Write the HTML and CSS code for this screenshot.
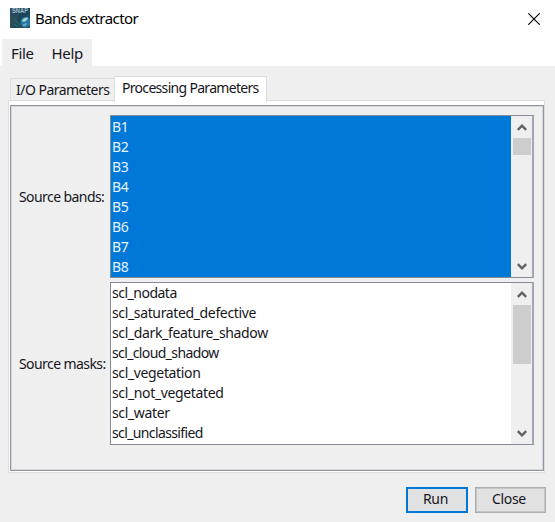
FILE: index.html
```html
<!DOCTYPE html>
<html lang="en">
<head>
<meta charset="utf-8">
<title>Bands extractor</title>
<link rel="stylesheet" href="styles.css">
</head>
<body>
<div class="window">
  <header class="titlebar">
    <svg class="logo" width="20" height="20" viewBox="0 0 20 20">
      <defs>
        <linearGradient id="sky" x1="0" y1="0" x2="1" y2="1"><stop offset="0" stop-color="#344f68"/><stop offset=".5" stop-color="#18445c"/><stop offset="1" stop-color="#1d6070"/></linearGradient>
        <filter id="soft"><feGaussianBlur stdDeviation=".6"/></filter>
      </defs>
      <rect width="20" height="20" fill="url(#sky)"/>
      <g filter="url(#soft)">
        <path d="M0 8L9 7L7 14L3 20H0Z" fill="#2b4f58"/>
        <circle cx="15.5" cy="14" r="5" fill="#2878a5"/>
        <path d="M12 13Q13 9.500 18 9.500L17 12L14 14Z" fill="#a9d3cd"/>
        <path d="M12 17L16 15L17 16L14 19Z" fill="#65a9bd"/>
        <path d="M5 12L10 17M4 16L8 19" stroke="#2d6b63" stroke-width="1.1"/>
      </g>
      <text x="2" y="5.300" class="logo-text" textLength="16" lengthAdjust="spacingAndGlyphs">SNAP</text>
    </svg>
    <h1 class="title">Bands extractor</h1>
    <svg class="close" width="12" height="12" viewBox="0 0 12 12"><path d="M.3.3L11.7 11.7M11.7.3L.3 11.7" stroke="#000" stroke-width="1.15"/></svg>
  </header>
  <nav class="menubar"><span class="file">File</span><span class="help">Help</span></nav>
  <main class="content">
    <div class="tabs"><div class="tab io"><span>I/O Parameters</span></div><div class="tab active"><span>Processing Parameters</span></div></div>
    <section class="pane">
      <div class="panel">
        <div class="field">
          <label class="label">Source bands:</label>
          <div class="listbox selected">
            <ul class="items"><li>B1</li><li>B2</li><li>B3</li><li>B4</li><li>B5</li><li>B6</li><li>B7</li><li>B8</li></ul>
            <div class="scrollbar">
              <svg class="arrow" width="10" height="7" viewBox="0 0 10 7"><path d="M.8 5.8L5 1.7L9.2 5.8"/></svg>
              <div class="thumb short"></div>
              <svg class="arrow down" width="10" height="7" viewBox="0 0 10 7"><path d="M.8 1.2L5 5.3L9.2 1.2"/></svg>
            </div>
          </div>
        </div>
        <div class="field">
          <label class="label">Source masks:</label>
          <div class="listbox masks">
            <ul class="items"><li class="snug">scl_nodata</li><li>scl_saturated_defective</li><li>scl_dark_feature_shadow</li><li class="tight">scl_cloud_shadow</li><li>scl_vegetation</li><li>scl_not_vegetated</li><li>scl_water</li><li class="tight">scl_unclassified</li></ul>
            <div class="scrollbar">
              <svg class="arrow" width="10" height="7" viewBox="0 0 10 7"><path d="M.8 5.8L5 1.7L9.2 5.8"/></svg>
              <div class="thumb long"></div>
              <svg class="arrow down" width="10" height="7" viewBox="0 0 10 7"><path d="M.8 1.2L5 5.3L9.2 1.2"/></svg>
            </div>
          </div>
        </div>
      </div>
    </section>
    <footer class="actions"><button class="btn run">Run</button><button class="btn cancel">Close</button></footer>
  </main>
</div>
</body>
</html>
```
FILE: styles.css
```css
* { box-sizing: border-box; }
body { margin: 0; background: #efefef; font: 14px/20px "Noto Sans", sans-serif; letter-spacing: -.35px; color: #16161c; overflow: hidden; }
.window { width: 555px; height: 522px; display: flex; flex-direction: column; background: #fff; }
.titlebar { height: 39px; display: flex; align-items: center; padding: 0 15px 1px 10px; }
.logo { margin-top: -2px; }
.logo-text { font: bold 7px "Liberation Sans", sans-serif; fill: #a6bdca; letter-spacing: 0; }
.title { margin: -2px auto 0 5px; font-size: 15px; font-weight: 400; letter-spacing: -.55px; color: #000; }
.menubar { width: 90px; height: 27px; margin-left: 2px; padding: 4px 0 0 9px; background: #efefef; display: flex; gap: 18px; font-size: 15px; }
.content { flex: 1; background: #efefef; padding: 10px 9px 0 8px; }
.tabs { height: 24px; display: flex; align-items: flex-end; padding-left: 2px; }
.tab { border: 1px solid #dcdce0; border-bottom: 0; white-space: nowrap; }
.io { width: 105px; height: 22px; padding: 1px 0 0 5px; letter-spacing: -.52px; }
.active { position: relative; width: 153px; height: 26px; margin: 0 0 -2px -1px; padding: 1px 0 0 7px; background: #fff; letter-spacing: -.69px; }
.pane { width: 537px; height: 373px; padding: 4px 1px 1px; background: #fff; border: 1px solid #dcdce0; }
.panel { width: 534px; height: 366px; background: #efefef; border: 1px solid #91959f; box-shadow: inset 0 0 0 1px #d4d6dc; padding: 9px 9px 0 8px; display: flex; flex-direction: column; gap: 4px; }
.field { display: flex; align-items: center; height: 163px; letter-spacing: -.58px; }
.label { width: 91px; white-space: nowrap; }
.listbox { flex: 1; height: 163px; border: 1px solid #858b98; border-right-width: 2px; border-right-color: #a4a7b1; background: #fff; display: flex; letter-spacing: -.36px; }
.items { flex: 1; list-style: none; margin: 0; padding: 0 0 0 1px; }
.items li { height: 20px; line-height: 20px; white-space: nowrap; }
.items .snug { letter-spacing: -.5px; }
.items .tight { letter-spacing: -.62px; }
.selected .items { padding-top: 1px; background: #0078d7; color: #e8f3fc; }
.scrollbar { width: 21px; background: #efefef; display: flex; flex-direction: column; align-items: center; padding: 8px 1px 7px; }
.arrow { flex: none; margin-left: 1px; fill: none; stroke: #606064; stroke-width: 2.4; }
.thumb { width: 18px; margin-top: 7px; background: #cdcdcd; }
.short { height: 17px; }
.long { height: 59px; }
.down { margin-top: auto; }
.actions { display: flex; justify-content: flex-end; gap: 7px; padding-top: 14px; }
.btn { height: 26px; padding: 0 3px 2px 0; background: #e1e1e1; border: 1px solid #adadad; box-shadow: inset 0 0 0 1px #c4c4c4; font: inherit; letter-spacing: -.35px; color: inherit; }
.run { width: 62px; border: 2px solid #0078d7; box-shadow: none; }
.cancel { width: 71px; }
```
